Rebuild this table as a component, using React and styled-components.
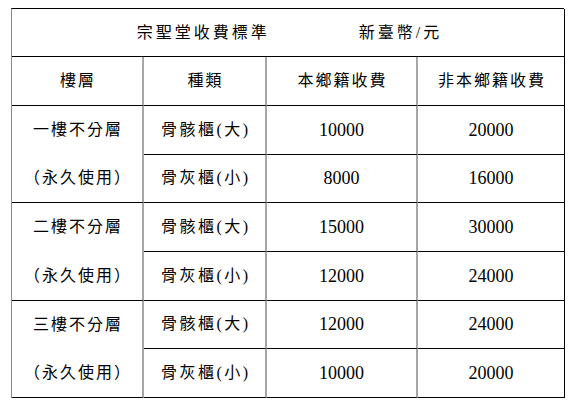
import React from "react";
import styled, { createGlobalStyle } from "styled-components";

const GlobalStyle = createGlobalStyle`
  html, body {
    margin: 0;
    padding: 0;
    background: #fff;
  }
  body {
    font-family: "Liberation Serif", "Noto Sans CJK TC", serif;
    color: #000;
  }
`;

const Table = styled.div`
  display: grid;
  grid-template-columns: 132px 123px 151px 147px;
  grid-template-rows: 48px 49px repeat(6, 48.67px);
  width: 553px;
  margin: 8px 0 0 11px;
  border-top: 1px solid #000;
  border-left: 1px solid #8a8a8a;
  box-sizing: border-box;
`;

const Cell = styled.div`
  display: flex;
  flex-direction: column;
  align-items: center;
  justify-content: ${(p) => (p.$stack ? "space-around" : "center")};
  box-sizing: border-box;
  border-bottom: 1px solid #000;
  border-right: ${(p) => (p.$last ? "1px solid #000" : "2px solid #a6a6a6")};
  grid-column: ${(p) => p.$span || "auto"};
  grid-row: ${(p) => (p.$rows ? `span ${p.$rows}` : "auto")};
`;

const TitleCell = styled(Cell)`
  flex-direction: row;
  gap: 92px;
  border-right: 1px solid #000;
`;

const Label = styled.span`
  font-size: 16px;
  letter-spacing: ${(p) => p.$spacing || 2}px;
  margin-right: -${(p) => p.$spacing || 2}px;
  line-height: 1;
`;

const Amount = styled.span`
  font-size: 18px;
  line-height: 1;
`;

const rows = [
  {
    floor: "一樓不分層",
    items: [
      ["骨骸櫃(大)", "10000", "20000"],
      ["骨灰櫃(小)", "8000", "16000"],
    ],
  },
  {
    floor: "二樓不分層",
    items: [
      ["骨骸櫃(大)", "15000", "30000"],
      ["骨灰櫃(小)", "12000", "24000"],
    ],
  },
  {
    floor: "三樓不分層",
    items: [
      ["骨骸櫃(大)", "12000", "24000"],
      ["骨灰櫃(小)", "10000", "20000"],
    ],
  },
];

export default function App() {
  return (
    <>
      <GlobalStyle />
      <Table>
        <TitleCell $span="1 / span 4">
          <Label $spacing={3}>宗聖堂收費標準</Label>
          <Label $spacing={3}>新臺幣/元</Label>
        </TitleCell>

        <Cell>
          <Label>樓層</Label>
        </Cell>
        <Cell>
          <Label>種類</Label>
        </Cell>
        <Cell>
          <Label>本鄉籍收費</Label>
        </Cell>
        <Cell $last>
          <Label>非本鄉籍收費</Label>
        </Cell>

        {rows.map((r) => (
          <React.Fragment key={r.floor}>
            <Cell $rows={2} $stack>
              <Label>{r.floor}</Label>
              <Label>（永久使用）</Label>
            </Cell>
            {r.items.map(([kind, local, other]) => (
              <React.Fragment key={kind}>
                <Cell>
                  <Label $spacing={2.5}>{kind}</Label>
                </Cell>
                <Cell>
                  <Amount>{local}</Amount>
                </Cell>
                <Cell $last>
                  <Amount>{other}</Amount>
                </Cell>
              </React.Fragment>
            ))}
          </React.Fragment>
        ))}
      </Table>
    </>
  );
}
